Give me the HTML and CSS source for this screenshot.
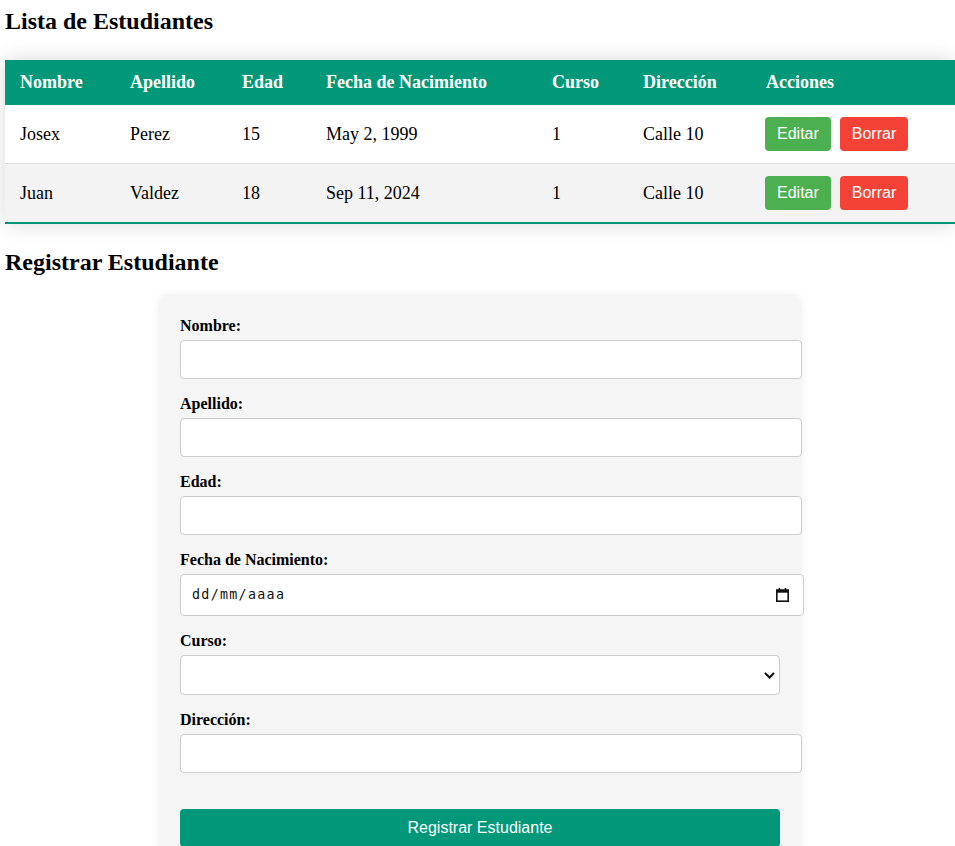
FILE: index.html
```html
<!DOCTYPE html>
<html lang="es">
<head>
<meta charset="utf-8">
<title>Estudiantes</title>
<link rel="stylesheet" href="styles.css">
</head>
<body>
<h2 class="page-title first">Lista de Estudiantes</h2>
<table class="students">
  <colgroup>
    <col class="c-nombre"><col class="c-apellido"><col class="c-edad"><col class="c-fecha"><col class="c-curso"><col class="c-dir"><col class="c-acc">
  </colgroup>
  <thead>
    <tr><th>Nombre</th><th>Apellido</th><th>Edad</th><th>Fecha de Nacimiento</th><th>Curso</th><th>Dirección</th><th>Acciones</th></tr>
  </thead>
  <tbody>
    <tr><td>Josex</td><td>Perez</td><td>15</td><td>May 2, 1999</td><td>1</td><td>Calle 10</td><td><button class="btn btn-edit">Editar</button><button class="btn btn-delete">Borrar</button></td></tr>
    <tr><td>Juan</td><td>Valdez</td><td>18</td><td>Sep 11, 2024</td><td>1</td><td>Calle 10</td><td><button class="btn btn-edit">Editar</button><button class="btn btn-delete">Borrar</button></td></tr>
  </tbody>
</table>
<h2 class="page-title">Registrar Estudiante</h2>
<form class="form-card">
  <label class="field-label">Nombre:</label>
  <input class="field" type="text">
  <label class="field-label">Apellido:</label>
  <input class="field" type="text">
  <label class="field-label">Edad:</label>
  <input class="field" type="text">
  <label class="field-label">Fecha de Nacimiento:</label>
  <div class="field date-field">
    <span class="date-text">dd/mm/aaaa</span>
    <svg class="cal-icon" width="13" height="14" viewBox="0 0 13 14" aria-hidden="true">
      <path d="M3.5 0v3M9.5 0v3" stroke="#111" stroke-width="1.6"/>
      <rect x="0.8" y="2.3" width="11.4" height="10.9" fill="none" stroke="#111" stroke-width="1.6"/>
      <rect x="0" y="1.5" width="13" height="3.2" fill="#111"/>
    </svg>
  </div>
  <label class="field-label">Curso:</label>
  <div class="select-wrap">
    <select class="select-field"><option></option></select>
    <svg class="chev" width="11" height="7" viewBox="0 0 11 7" aria-hidden="true"><path d="M1 1l4.5 4.5L10 1" fill="none" stroke="#111" stroke-width="2"/></svg>
  </div>
  <label class="field-label">Dirección:</label>
  <input class="field" type="text">
  <button type="button" class="submit-btn">Registrar Estudiante</button>
</form>
</body>
</html>
```
FILE: styles.css
```css
html, body {
  background: #ffffff;
}
body {
  margin: 0;
  padding: 8px 0 0 5px;
  font-family: "Liberation Serif", "Times New Roman", serif;
  font-size: 16px;
  color: #000;
}
.page-title {
  font-size: 24px;
  font-weight: bold;
  margin: 19.92px 0;
}
.page-title.first {
  margin-top: 0;
}
.students {
  width: 100%;
  border-collapse: collapse;
  table-layout: fixed;
  margin: 25px 0;
  font-size: 18px;
  box-shadow: 0 0 20px rgba(0, 0, 0, 0.15);
}
.c-nombre { width: 110px; }
.c-apellido { width: 112px; }
.c-edad { width: 84px; }
.c-fecha { width: 226px; }
.c-curso { width: 91px; }
.c-dir { width: 123px; }
.c-acc { width: 204px; }
.students thead tr {
  background: #009879;
  color: #ffffff;
  text-align: left;
}
.students th,
.students td {
  padding: 12px 15px;
  white-space: nowrap;
}
.students tbody tr {
  border-bottom: 1px solid #dddddd;
}
.students tbody tr:nth-of-type(even) {
  background: #f3f3f3;
}
.students tbody tr:last-of-type {
  border-bottom: 2px solid #009879;
}
.btn {
  font-family: "Liberation Sans", Arial, sans-serif;
  font-size: 16px;
  line-height: 18px;
  padding: 8px 12px;
  border: none;
  border-radius: 4px;
  color: #ffffff;
  margin: 0 10px 0 -1px;
  vertical-align: middle;
}
.btn-edit { background: #4caf50; }
.btn-delete { background: #f44336; }

.form-card {
  max-width: 600px;
  margin: 0 auto;
  padding: 20px;
  background: #f5f5f5;
  border-radius: 8px;
  box-shadow: 0 0 10px rgba(0, 0, 0, 0.1);
}
.field-label {
  display: block;
  font-weight: bold;
  line-height: 19px;
  margin-bottom: 5px;
}
.field {
  display: block;
  width: 100%;
  height: 17px;
  padding: 10px;
  margin: 0 0 15px 0;
  border: 1px solid #cccccc;
  border-radius: 4px;
  background: #ffffff;
  font-family: "Liberation Sans", Arial, sans-serif;
  font-size: 13.33px;
}
.date-field {
  height: 20px;
  display: flex;
  align-items: center;
  justify-content: space-between;
  padding: 10px 14px 10px 11px;
  width: 597px;
}
.date-text {
  font-family: "DejaVu Sans Mono", "Liberation Mono", monospace;
  font-size: 13.33px;
  letter-spacing: 1.3px;
  color: #111;
}
.cal-icon {
  display: block;
}
.select-wrap {
  position: relative;
  width: 600px;
  margin-bottom: 15px;
}
.select-field {
  display: block;
  width: 100%;
  height: 40px;
  padding: 10px;
  border: 1px solid #cccccc;
  border-radius: 4px;
  background: #ffffff;
  font-family: "Liberation Sans", Arial, sans-serif;
  font-size: 13.33px;
  appearance: none;
  -webkit-appearance: none;
}
.chev {
  position: absolute;
  right: 5px;
  top: 17px;
  pointer-events: none;
}
.submit-btn {
  display: block;
  width: 100%;
  margin-top: 36px;
  padding: 10px;
  border: none;
  border-radius: 4px;
  background: #009879;
  color: #ffffff;
  font-family: "Liberation Sans", Arial, sans-serif;
  font-size: 16px;
  line-height: 18px;
}
```
